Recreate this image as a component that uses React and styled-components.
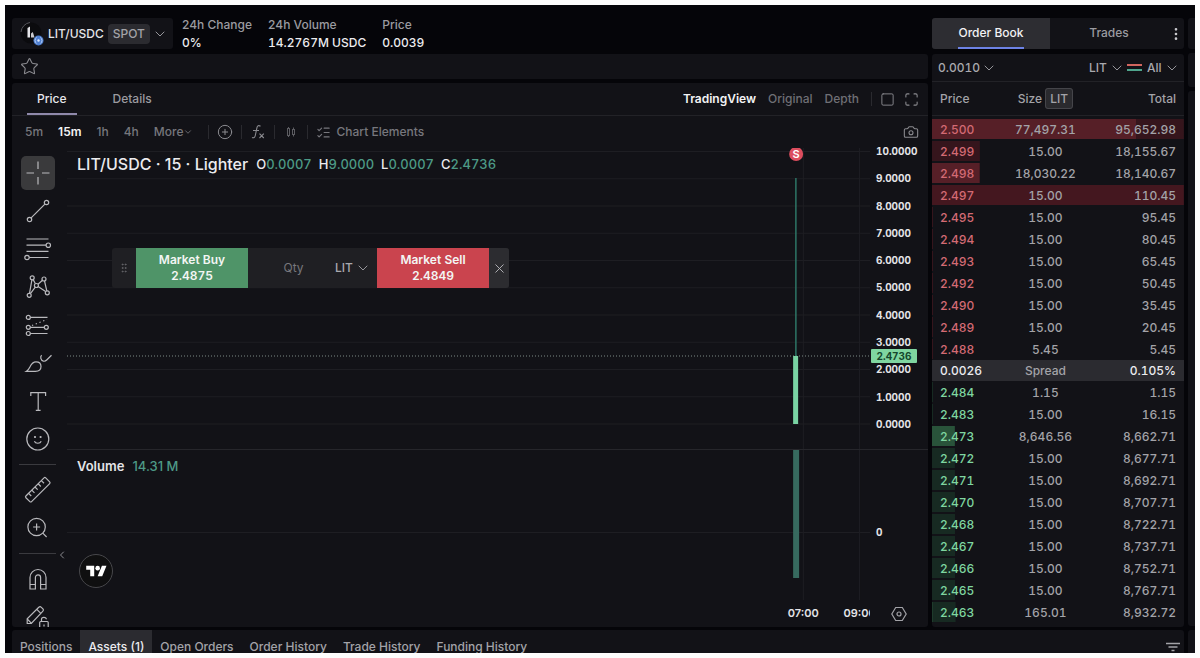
import React, { useState } from "react";
import styled, { createGlobalStyle, css } from "styled-components";
import {
    Camera,
    ChevronDown,
    ChevronLeft,
    CirclePlus,
    EllipsisVertical,
    GripVertical,
    ListChecks,
    Maximize,
    Square,
    Star,
    X,
} from "lucide-react";

const GlobalStyle = createGlobalStyle`
* { box-sizing: border-box; }
body {
    margin: 0;
    background: #fdfdfd;
    font-family: Inter, "Liberation Sans", sans-serif;
    font-size: 12px;
    line-height: 18px;
    color: #a3a3a8;
}
button, input, select {
    font: inherit;
    color: inherit;
    background: none;
    border: 0;
    margin: 0;
    padding: 0;
}
button, select { cursor: pointer; }
h1, p { margin: 0; }
`;

/* ---------- page frame ---------- */

const Page = styled.div`
padding: 5px;
height: 100vh;
`;

const Shell = styled.div`
display: grid;
grid-template-columns: minmax(0, 1fr) 7px;
column-gap: 4px;
height: 100%;
overflow: hidden;
padding: 13px 0 0 7px;
background: #050509;
`;

const Content = styled.div`
display: flex;
flex-direction: column;
gap: 3px;
min-width: 0;
`;

const Columns = styled.div`
display: grid;
grid-template-columns: minmax(0, 1fr) 252px;
column-gap: 4px;
`;

const Column = styled.div`
display: flex;
flex-direction: column;
min-width: 0;
`;

const Panel = styled.section`
background: #121217;
border-radius: 3px;
`;

const SidePanel = styled(Panel)`
height: ${({ $height }) => $height}px;
margin-bottom: 4px;
border-radius: 3px 0 0 3px;
`;

/* ---------- market header ---------- */

const MarketHeader = styled.header`
display: flex;
align-items: stretch;
gap: 9px;
height: 31px;
margin-bottom: 5px;
`;

const PairButton = styled.button`
display: flex;
align-items: center;
gap: 4px;
width: 161px;
padding: 0 6px 0 8px;
background: #121217;
border-radius: 3px;
color: #e4e4e7;
font-weight: 500;

svg { flex: none; }
`;

const SpotTag = styled.span`
padding: 1px 5px;
margin-right: -2px;
border-radius: 4px;
background: #2b2b30;
color: #a3a3a8;
`;

const Stats = styled.dl`
display: flex;
gap: 16px;
margin: -2px 0 0;
`;

const Stat = styled.div`
font-weight: 500;

dt { color: #9b9ba0; }
dd { margin: 0; color: #ececef; font-variant-numeric: tabular-nums; }
`;

const FavoriteBar = styled(Panel)`
display: flex;
align-items: center;
height: 25px;
margin-bottom: 4px;
padding-left: 8px;
`;

const IconButton = styled.button`
display: inline-flex;
align-items: center;
justify-content: center;
color: ${({ $color }) => $color || "#8b8b90"};
`;

/* ---------- chart header ---------- */

const ChartTop = styled.div`
display: flex;
align-items: stretch;
height: 33px;
padding: 0 9px 0 15px;
border-bottom: 1px solid #222227;
`;

const ChartTabs = styled.div`
display: flex;
gap: 26px;
flex: 1;
`;

const ChartTab = styled.button`
padding: 1px 10px 0;
color: ${({ $active }) => ($active ? "#e8e8ec" : "#9b9ba0")};
font-weight: 500;
border-bottom: 2px solid ${({ $active }) => ($active ? "#8f89ab" : "transparent")};
`;

const ViewSwitch = styled.div`
display: flex;
align-items: center;
gap: 12px;
`;

const WindowButtons = styled.div`
display: flex;
gap: 9px;
margin-left: -4px;
`;

const ViewButton = styled.button`
color: ${({ $active }) => ($active ? "#f2f2f4" : "#6f6f75")};
font-weight: ${({ $active }) => ($active ? 600 : 500)};
`;

const Divider = styled.span`
width: 1px;
height: 14px;
background: #2a2a2f;
`;

const IntervalBar = styled.div`
display: flex;
align-items: center;
gap: 15px;
height: 32px;
padding: 0 9px 0 13px;
color: #77777d;
font-weight: 500;
`;

const IntervalButton = styled.button`
display: inline-flex;
align-items: center;
color: ${({ $active }) => ($active ? "#f2f2f4" : "#77777d")};
font-weight: ${({ $active }) => ($active ? 600 : 500)};
`;

const ToolGroup = styled.div`
display: flex;
align-items: center;
gap: 8px;
flex: 1;
`;

const ElementsButton = styled(IconButton)`
gap: 5px;
`;

/* ---------- chart ---------- */

const ChartBody = styled.div`
display: flex;
height: 479px;
`;

const DrawingBar = styled.div`
display: flex;
flex-direction: column;
align-items: center;
flex: none;
gap: 4px;
width: 55px;
padding: 8px 4px 0 0;
overflow: hidden;
`;

const ToolButton = styled.button`
flex: none;
width: 34px;
height: 34px;
border-radius: 5px;
color: #b9b9bd;
background: ${({ $active }) => ($active ? "#3a3a3c" : "none")};

svg { display: block; }
`;

const ToolDivider = styled.span`
flex: none;
width: 37px;
height: 1px;
margin: 4px 0;
background: #3a3a3f;
`;

const Canvas = styled.div`
position: relative;
flex: 1;
min-width: 0;
color: #e4e4e7;
font-weight: 600;
`;

const Pane = styled.div`
position: relative;
display: flex;
height: ${({ $height }) => $height}px;
border-bottom: ${({ $line }) => ($line ? "1px solid #26262b" : "0")};
`;

const Plot = styled.svg`
flex: 1;
min-width: 0;
height: 100%;
font-size: 11px;
`;

const Axis = styled.div`
display: flex;
flex-direction: column;
justify-content: ${({ $center }) => ($center ? "center" : "space-between")};
flex: none;
width: 58px;
height: ${({ $height }) => $height}px;
padding-left: 6px;
margin-top: -4px;
font-size: 10px;
font-weight: 700;
font-variant-numeric: tabular-nums;
line-height: 14px;
`;

const LastPrice = styled.span`
position: absolute;
top: 201px;
right: 11px;
width: 46px;
border-radius: 1px;
background: #7fd6a0;
color: #14472c;
font-size: 10px;
font-weight: 700;
font-variant-numeric: tabular-nums;
line-height: 14px;
text-align: center;
`;

const Legend = styled.div`
position: absolute;
top: ${({ $top }) => $top}px;
left: 10px;
display: flex;
align-items: center;
gap: 8px;
font-size: 13px;
line-height: 20px;
white-space: nowrap;
`;

const LegendTitle = styled.h1`
font-size: 16px;
font-weight: 500;
color: #ececef;
`;

const LegendValues = styled.div`
display: flex;
gap: 7px;
color: #ececef;
font-weight: 500;
font-variant-numeric: tabular-nums;

b { color: #4d9a86; font-weight: 500; }
`;

const VolumeValue = styled.span`
color: #4d9a86;
font-weight: 500;
`;

const TradeBar = styled.form`
position: absolute;
top: 100px;
left: 45px;
display: flex;
height: 40px;
border-radius: 3px;
overflow: hidden;
background: #1f1f23;
font-weight: 400;
`;

const DragHandle = styled.span`
display: flex;
align-items: center;
justify-content: center;
width: 24px;
color: #6d6d72;
`;

const OrderButton = styled.button`
width: 112px;
line-height: 16px;
color: #f3f6f4;
font-weight: 600;
font-variant-numeric: tabular-nums;
background: ${({ $side }) => ($side === "buy" ? "#4f9468" : "#ca444e")};

span { display: block; }
`;

const QtyInput = styled.input`
width: 87px;
padding-left: 4px;
text-align: center;
outline: 0;

&::placeholder { color: #77777c; opacity: 1; }
`;

const UnitSlot = styled.div`
display: flex;
align-items: center;
width: 42px;
`;

const CloseButton = styled.button`
display: flex;
align-items: center;
justify-content: center;
width: 20px;
background: #2c2c30;
color: #b5b5ba;
`;

const TvBadge = styled.a`
position: absolute;
left: 12px;
bottom: 39px;
display: flex;
align-items: center;
justify-content: center;
width: 34px;
height: 34px;
border: 1px solid #47474b;
border-radius: 50%;
background: #0f0f10;
`;

const CollapseButton = styled(IconButton)`
position: absolute;
left: -11px;
bottom: 66px;
`;

const AxisCorner = styled.div`
display: flex;
align-items: center;
flex: none;
width: 58px;
padding-left: 21px;
`;

/* ---------- order book ---------- */

const BookTabs = styled(Panel)`
display: flex;
height: 31px;
margin-bottom: 5px;
overflow: hidden;
`;

const BookTab = styled.button`
display: flex;
justify-content: center;
flex: none;
width: 118px;
font-weight: 500;
color: ${({ $active }) => ($active ? "#f2f2f4" : "#9b9ba0")};
background: ${({ $active }) => ($active ? "#2d2d32" : "none")};

span {
    line-height: 30px;
    height: 31px;
    border-bottom: 2px solid ${({ $active }) => ($active ? "#6d83e6" : "transparent")};
}
`;

const BookPanel = styled(Panel)`
flex: 1;
`;

const BookToolbar = styled.div`
display: flex;
align-items: center;
height: 28px;
padding: 0 4px 0 6px;
border-bottom: 1px solid #222227;
`;

const Picker = styled.label`
display: inline-flex;
align-items: center;
gap: ${({ $push }) => ($push ? 0 : 2)}px;
color: #a9a9ae;
font-weight: 500;
margin-right: ${({ $push }) => ($push ? "auto" : "0")};

select { appearance: none; outline: 0; font-variant-numeric: tabular-nums; }
svg { pointer-events: none; flex: none; }
`;

const BookMode = styled.span`
display: flex;
padding: 0 5px 0 2px;
`;

const BookTable = styled.table`
width: 100%;
table-layout: fixed;
border-spacing: 0;
font-variant-numeric: tabular-nums;

th, td {
    padding: 0;
    text-align: center;
    font-weight: 500;
}
th { color: #a3a3a8; height: 34px; border-bottom: 1px solid #222227; }
td { height: 22px; padding-top: 1px; }
th:first-child, td:first-child { width: 30%; padding-left: 8px; text-align: left; }
th:nth-child(2), td:nth-child(2) { width: 30%; }
th:last-child, td:last-child { padding-right: 8px; text-align: right; }
`;

const UnitTag = styled.span`
padding: 2px 4px;
border: 1px solid #45454a;
border-radius: 3px;
background: #2a2a2e;
`;

const BookGap = styled.tr`
td { height: 2px; line-height: 0; }
`;

const shades = {
    ask: { text: "#d36a74", size: "#561f27", depth: "#35151c" },
    bid: { text: "#7fd6a0", size: "#29533a", depth: "#172a22" },
};

const bar = (color) => `linear-gradient(${color}, ${color})`;

const BookRow = styled.tr`
${({ $side, $size, $depth, $flash }) => {
    const shade = shades[$side];
    return css`
        background-image: ${bar(shade.size)}, ${bar($flash ? "#44171f" : shade.depth)};
        background-size: ${$size}% 20px, max(1px, ${$flash ? 100 : $depth}%) 20px;
        background-position: 0 1px;
        background-repeat: no-repeat;

        td:first-child { color: ${shade.text}; }
    `;
}}
`;

const SpreadRow = styled.tr`
background: #2b2b30;

td { height: 21px; }
td:first-child, td:last-child { color: #ececef; }
`;

/* ---------- bottom bar ---------- */

const BottomBar = styled(Panel)`
display: flex;
justify-content: space-between;
align-items: stretch;
height: 33px;
padding-right: 4px;
`;

const BottomTab = styled.button`
height: 100%;
padding: 0 8px;
color: ${({ $active }) => ($active ? "#ececef" : "#a3a3a8")};
font-weight: 500;
background: ${({ $active }) => ($active ? "#2b2b30" : "none")};
`;

/* ---------- data ---------- */

const asks = [
    ["2.500", 77497.31, 95652.98],
    ["2.499", 15, 18155.67],
    ["2.498", 18030.22, 18140.67],
    ["2.497", 15, 110.45, true],
    ["2.495", 15, 95.45],
    ["2.494", 15, 80.45],
    ["2.493", 15, 65.45],
    ["2.492", 15, 50.45],
    ["2.490", 15, 35.45],
    ["2.489", 15, 20.45],
    ["2.488", 5.45, 5.45],
];

const bids = [
    ["2.484", 1.15, 1.15],
    ["2.483", 15, 16.15],
    ["2.473", 8646.56, 8662.71],
    ["2.472", 15, 8677.71],
    ["2.471", 15, 8692.71],
    ["2.470", 15, 8707.71],
    ["2.468", 15, 8722.71],
    ["2.467", 15, 8737.71],
    ["2.466", 15, 8752.71],
    ["2.465", 15, 8767.71],
    ["2.463", 165.01, 8932.72],
];

const maxTotal = 95652.98;
const prices = [10, 9, 8, 7, 6, 5, 4, 3, 2, 1, 0];
const times = [
    { label: "07:00", x: "91.7%" },
    { label: "09:00", x: "98.7%" },
];
const candleX = "90.8%";

const format = (n) =>
    n.toLocaleString("en-US", { minimumFractionDigits: 2, maximumFractionDigits: 2 });

/* ---------- icons ---------- */

const toolIcons = {
    "Cross": <path d="M17 5.5V13M17 21v7.5M5.5 17H13M21 17h7.5" />,
    "Trend line": (
        <>
            <circle cx="25.5" cy="8.5" r="2.2" />
            <circle cx="8.5" cy="25.5" r="2.2" />
            <path d="M10.1 23.9 23.9 10.1" />
        </>
    ),
    "Fib retracement": (
        <>
            <path d="M5.5 7h22M5.5 13.2h19.6M5.5 19.4h22M8.2 25.5h19.3" />
            <circle cx="27.3" cy="13.2" r="2.2" />
            <circle cx="6" cy="25.5" r="2.2" />
        </>
    ),
    "Pattern": (
        <>
            <circle cx="11.2" cy="7.8" r="2" />
            <circle cx="23" cy="9" r="2" />
            <circle cx="15.4" cy="15.5" r="2" />
            <circle cx="8.2" cy="25.3" r="2" />
            <circle cx="26.3" cy="22.8" r="2" />
            <path d="M8.5 23.3 10.9 9.8M12.2 9.6l2.2 4.1M17 14.2l4.5-4M23.5 11l2.3 9.9M14.3 17.2l-4.9 6.5M17.1 16.6l7.5 5" />
        </>
    ),
    "Forecast": (
        <>
            <circle cx="7.3" cy="9.4" r="2" />
            <circle cx="7.3" cy="19.3" r="2" />
            <circle cx="25.3" cy="19.3" r="2" />
            <circle cx="7.3" cy="25.5" r="2" />
            <path d="M9.3 9.4h17.2M9.3 19.3h14M9.3 25.5h17.2" />
            <path d="M11 17.5 26 11.5" strokeDasharray="1.3 2.7" />
        </>
    ),
    "Brush": (
        <>
            <path d="M5.5 25.3c1.8-1 2.6-2.7 3.5-4.5 1.4-3 3.2-5 6-5 3 0 5 1.9 5 4.7 0 3-2.4 4.8-5.6 4.8z" />
            <path d="M20.7 9.3c-1.6 1.2-1.3 5.2 1.8 5.9 1.5.3 2.4-.4 3.2-1.2l4.8-4.7" />
        </>
    ),
    "Text": <path d="M9.8 12V8.7h14.8V12M17.2 8.7v17.6M14.8 26.3h4.8" />,
    "Emoji": (
        <>
            <circle cx="16.8" cy="17" r="11" />
            <path d="M13.4 19.3c1 2.6 5.8 2.6 6.8 0" />
            <circle cx="14" cy="15" r=".5" fill="currentColor" />
            <circle cx="19.6" cy="15" r=".5" fill="currentColor" />
        </>
    ),
    "Measure": (
        <g transform="rotate(-45 17 17)">
            <rect x="3" y="12.7" width="28" height="8" rx="1.2" />
            <path d="M8 12.7v3.8M12.5 12.7v3.8M17 12.7v3.8M21.5 12.7v3.8M26 12.7v3.8" />
        </g>
    ),
    "Zoom in": (
        <>
            <circle cx="15.6" cy="16" r="8.7" />
            <path d="M12.1 16h7M15.6 12.5v7M21.8 22.2l3.8 3.8" />
        </>
    ),
    "Magnet": (
        <>
            <path d="M9 27V15.5a8 8 0 0 1 16 0V27h-5.4V15.5a2.6 2.6 0 0 0-5.2 0V27z" />
            <path d="M9 22.5h5.4M19.6 22.5H25" />
        </>
    ),
    "Lock drawings": (
        <>
            <path d="M6.2 23.5v-4.8L17.8 7.3c.9-.8 1.7-.8 2.5 0l1.4 1.4c.9.9.9 1.7 0 2.6L10.3 23.5z" />
            <path d="m15.8 9.3 4 4M6.2 19l4.3 4.3" />
            <rect x="18.7" y="21.5" width="8.5" height="7.5" rx="1" />
            <path d="M20.5 21.5v-2.2c0-2.6 4.6-2.7 4.9 0M23 24.5v2" />
        </>
    ),
};

const Tool = ({ name, active }) => (
    <ToolButton type="button" aria-label={name} $active={active}>
        <svg width="34" height="34" fill="none" stroke="currentColor" strokeWidth="1.2">
            {toolIcons[name]}
        </svg>
    </ToolButton>
);

const Chevron = () => <ChevronDown size={16} strokeWidth={1.5} color="#96969b" />;

const PairLogo = () => (
    <svg width="24" height="26" viewBox="0 0 24 26">
        <circle cx="11" cy="12" r="10.5" fill="#0b0b0e" />
        <path d="M1 11a10.5 10.5 0 0 1 9-9.500" fill="none" stroke="#56565c" />
        <path d="M7.5 7 10 5.500v11H7.500z" fill="#e6e6ea" />
        <path d="M11 12.500 12.800 11l1.700 5.500H11z" fill="#c9c9ce" />
        <circle cx="18.5" cy="19.5" r="5" fill="#4f7fd0" />
        <path d="M16.7 16.5a3.500 3.500 0 0 0 0 6M20.300 16.500a3.500 3.500 0 0 1 0 6" fill="none" stroke="#b9d0f5" />
        <circle cx="18.5" cy="19.5" r="1.2" fill="#dbe7fb" />
    </svg>
);

const FunctionIcon = () => (
    <svg width="16" height="16" fill="none" stroke="currentColor" strokeWidth="1.1">
        <path d="M10.5 2.2C8.6 1 7.3 1.8 6.9 3.8L5.3 11.5c-.4 2-1.5 2.6-3.3 1.9M3 6.5h6M9.5 9.7l4.3 4.3M13.8 9.7 9.5 14" />
    </svg>
);

const CandlesIcon = () => (
    <svg width="16" height="16" fill="none" stroke="currentColor">
        <path d="M5.5 3v1.5M5.5 11.5V13M10.5 3.5V5M10.5 11v1.5" />
        <rect x="4.5" y="4.5" width="2" height="7" />
        <rect x="9.5" y="5.5" width="2" height="5" />
    </svg>
);

const BookIcon = () => (
    <svg width="15" height="10">
        <rect width="15" height="2" y="1" fill="#d1665f" />
        <rect width="15" height="2" y="6" fill="#4fa58d" />
    </svg>
);

const FilterIcon = () => (
    <svg width="15" height="10" stroke="#a3a3a8" strokeWidth="1.3">
        <path d="M1 1.5h14M3.5 5h9M6.5 8.5h3" />
    </svg>
);

/* ---------- sections ---------- */

const Header = () => (
    <MarketHeader>
        <PairButton type="button">
            <PairLogo />
            LIT/USDC
            <SpotTag>SPOT</SpotTag>
            <Chevron />
        </PairButton>
        <Stats>
            <Stat><dt>24h Change</dt><dd>0%</dd></Stat>
            <Stat><dt>24h Volume</dt><dd>14.2767M USDC</dd></Stat>
            <Stat><dt>Price</dt><dd>0.0039</dd></Stat>
        </Stats>
    </MarketHeader>
);

const TimeLines = () =>
    times.map(({ label, x }) => (
        <line key={label} x1={x} x2={x} y1="0" y2="100%" stroke="#1e1e23" />
    ));

const OrderTicket = () => (
    <TradeBar onSubmit={(e) => e.preventDefault()}>
        <DragHandle><GripVertical size={12} strokeWidth={1.5} /></DragHandle>
        <OrderButton type="button" $side="buy">
            <span>Market Buy</span>
            <span>2.4875</span>
        </OrderButton>
        <QtyInput aria-label="Quantity" placeholder="Qty" />
        <UnitSlot>
            <Picker>
                <select aria-label="Unit"><option>LIT</option></select>
                <Chevron />
            </Picker>
        </UnitSlot>
        <OrderButton type="button" $side="sell">
            <span>Market Sell</span>
            <span>2.4849</span>
        </OrderButton>
        <CloseButton type="button" aria-label="Close">
            <X size={15} strokeWidth={1.5} />
        </CloseButton>
    </TradeBar>
);

const PriceChart = () => (
    <Canvas>
        <Pane $height={302} $line>
            <Plot>
                {prices.map((p, i) => (
                    <line key={p} x1="0" x2="100%" y1={3.5 + i * 27.25} y2={3.5 + i * 27.25} stroke="#1e1e23" />
                ))}
                <TimeLines />
                <line x1="0" x2="100%" y1="208" y2="208" stroke="#7d8a86" strokeDasharray="1 2" />
                <svg x={candleX} overflow="visible">
                    <rect x="-1" y="30" width="1.5" height="178" fill="#2d7566" />
                    <rect x="-3" y="208" width="5" height="68" fill="#79d3a3" />
                    <circle cy="6" r="7" fill="#dc4d5e" />
                    <text y="10" fill="#fff" textAnchor="middle">S</text>
                </svg>
            </Plot>
            <Axis $height={287}>
                {prices.map((p) => <span key={p}>{p.toFixed(4)}</span>)}
            </Axis>
            <LastPrice>2.4736</LastPrice>
        </Pane>
        <Pane $height={150}>
            <Plot>
                <line x1="0" x2="100%" y1="82.5" y2="82.5" stroke="#1e1e23" />
                <TimeLines />
                <svg x={candleX} overflow="visible">
                    <rect x="-3" width="6" height="128" fill="#376a5f" />
                </svg>
            </Plot>
            <Axis $center $height={172}><span>0</span></Axis>
        </Pane>
        <Pane $height={27}>
            <Plot>
                {times.map(({ label, x }) => (
                    <text key={label} x={x} y="17" fill="#e4e4e7" textAnchor="middle">{label}</text>
                ))}
            </Plot>
            <AxisCorner>
                <IconButton type="button" aria-label="Chart settings">
                    <svg width="16" height="16" fill="none" stroke="#a3a3a8" strokeWidth="1.2">
                        <path d="M4.7 1.5h6.6L15.2 8l-3.9 6.5H4.7L.8 8z" />
                        <circle cx="8" cy="8" r="2" />
                    </svg>
                </IconButton>
            </AxisCorner>
        </Pane>
        <Legend $top={6}>
            <LegendTitle>LIT/USDC · 15 · Lighter</LegendTitle>
            <LegendValues>
                <span>O<b>0.0007</b></span>
                <span>H<b>9.0000</b></span>
                <span>L<b>0.0007</b></span>
                <span>C<b>2.4736</b></span>
            </LegendValues>
        </Legend>
        <Legend $top={308}>
            <span>Volume</span>
            <VolumeValue>14.31 M</VolumeValue>
        </Legend>
        <OrderTicket />
        <TvBadge href="#tradingview" aria-label="TradingView">
            <svg width="21" height="16" viewBox="0 0 36 28" fill="#fff">
                <path d="M14 23H7V12H0V5h14v18zM28 23h-8l7.5-18h8L28 23z" />
                <circle cx="20" cy="9" r="4" />
            </svg>
        </TvBadge>
        <CollapseButton type="button" aria-label="Hide toolbar">
            <ChevronLeft size={12} strokeWidth={2} />
        </CollapseButton>
    </Canvas>
);

const ChartPanel = () => {
    const [interval, setInterval] = useState("15m");
    const [view, setView] = useState("TradingView");

    return (
        <Panel>
            <ChartTop>
                <ChartTabs>
                    <ChartTab type="button" $active>Price</ChartTab>
                    <ChartTab type="button">Details</ChartTab>
                </ChartTabs>
                <ViewSwitch>
                    {["TradingView", "Original", "Depth"].map((name) => (
                        <ViewButton key={name} type="button" $active={view === name} onClick={() => setView(name)}>
                            {name}
                        </ViewButton>
                    ))}
                    <Divider />
                    <WindowButtons>
                        <IconButton type="button" aria-label="Single layout"><Square size={15} strokeWidth={1.5} /></IconButton>
                        <IconButton type="button" aria-label="Fullscreen"><Maximize size={15} strokeWidth={1.7} /></IconButton>
                    </WindowButtons>
                </ViewSwitch>
            </ChartTop>
            <IntervalBar>
                {["5m", "15m", "1h", "4h"].map((name) => (
                    <IntervalButton key={name} type="button" $active={interval === name} onClick={() => setInterval(name)}>
                        {name}
                    </IntervalButton>
                ))}
                <IntervalButton type="button">More<ChevronDown size={10} /></IntervalButton>
                <ToolGroup>
                    <Divider />
                    <IconButton type="button" aria-label="Compare"><CirclePlus size={16} strokeWidth={1.5} /></IconButton>
                    <Divider />
                    <IconButton type="button" aria-label="Indicators"><FunctionIcon /></IconButton>
                    <Divider />
                    <IconButton type="button" aria-label="Candles" $color="#5c5c61"><CandlesIcon /></IconButton>
                    <Divider />
                    <ElementsButton type="button" $color="#77777d">
                        <ListChecks size={15} strokeWidth={1.8} />
                        Chart Elements
                    </ElementsButton>
                </ToolGroup>
                <IconButton type="button" aria-label="Screenshot"><Camera size={16} strokeWidth={1.6} /></IconButton>
            </IntervalBar>
            <ChartBody>
                <DrawingBar>
                    <Tool name="Cross" active />
                    <Tool name="Trend line" />
                    <Tool name="Fib retracement" />
                    <Tool name="Pattern" />
                    <Tool name="Forecast" />
                    <Tool name="Brush" />
                    <Tool name="Text" />
                    <Tool name="Emoji" />
                    <ToolDivider />
                    <Tool name="Measure" />
                    <Tool name="Zoom in" />
                    <ToolDivider />
                    <Tool name="Magnet" />
                    <Tool name="Lock drawings" />
                </DrawingBar>
                <PriceChart />
            </ChartBody>
        </Panel>
    );
};

const Levels = ({ side, rows }) =>
    rows.map(([price, size, total, flash]) => (
        <BookRow
            key={price}
            $side={side}
            $size={(size / maxTotal) * 100}
            $depth={(total / maxTotal) * 100}
            $flash={flash}
        >
            <td>{price}</td>
            <td>{format(size)}</td>
            <td>{format(total)}</td>
        </BookRow>
    ));

const OrderBook = () => (
    <Column>
        <BookTabs>
            <BookTab type="button" $active><span>Order Book</span></BookTab>
            <BookTab type="button"><span>Trades</span></BookTab>
            <IconButton type="button" aria-label="More" $color="#c9c9cd">
                <EllipsisVertical size={16} />
            </IconButton>
        </BookTabs>
        <BookPanel>
            <BookToolbar>
                <Picker $push>
                    <select aria-label="Tick size"><option>0.0010</option></select>
                    <Chevron />
                </Picker>
                <Picker>
                    <select aria-label="Book unit"><option>LIT</option></select>
                    <Chevron />
                </Picker>
                <BookMode><BookIcon /></BookMode>
                <Picker>
                    <select aria-label="Book side"><option>All</option></select>
                    <Chevron />
                </Picker>
            </BookToolbar>
            <BookTable>
                <thead>
                    <tr>
                        <th>Price</th>
                        <th>Size <UnitTag>LIT</UnitTag></th>
                        <th>Total</th>
                    </tr>
                </thead>
                <tbody>
                    <BookGap><td colSpan={3} /></BookGap>
                    <Levels side="ask" rows={asks} />
                    <SpreadRow>
                        <td>0.0026</td>
                        <td>Spread</td>
                        <td>0.105%</td>
                    </SpreadRow>
                    <Levels side="bid" rows={bids} />
                </tbody>
            </BookTable>
        </BookPanel>
    </Column>
);

const bottomTabs = ["Positions", "Assets (1)", "Open Orders", "Order History", "Trade History", "Funding History"];

const App = () => {
    const [tab, setTab] = useState("Assets (1)");

    return (
        <Page>
            <GlobalStyle />
            <Shell>
                <Content>
                    <Columns>
                        <Column>
                            <Header />
                            <FavoriteBar>
                                <IconButton type="button" aria-label="Favorite">
                                    <Star size={19} strokeWidth={1.4} />
                                </IconButton>
                            </FavoriteBar>
                            <ChartPanel />
                        </Column>
                        <OrderBook />
                    </Columns>
                    <BottomBar>
                        <nav>
                            {bottomTabs.map((name) => (
                                <BottomTab key={name} type="button" $active={tab === name} onClick={() => setTab(name)}>
                                    {name}
                                </BottomTab>
                            ))}
                        </nav>
                        <IconButton type="button" aria-label="Filter"><FilterIcon /></IconButton>
                    </BottomBar>
                </Content>
                <div>
                    <SidePanel $height={31} />
                    <SidePanel $height={34} />
                    <SidePanel $height={535} />
                    <SidePanel $height={32} />
                </div>
            </Shell>
        </Page>
    );
};

export default App;
